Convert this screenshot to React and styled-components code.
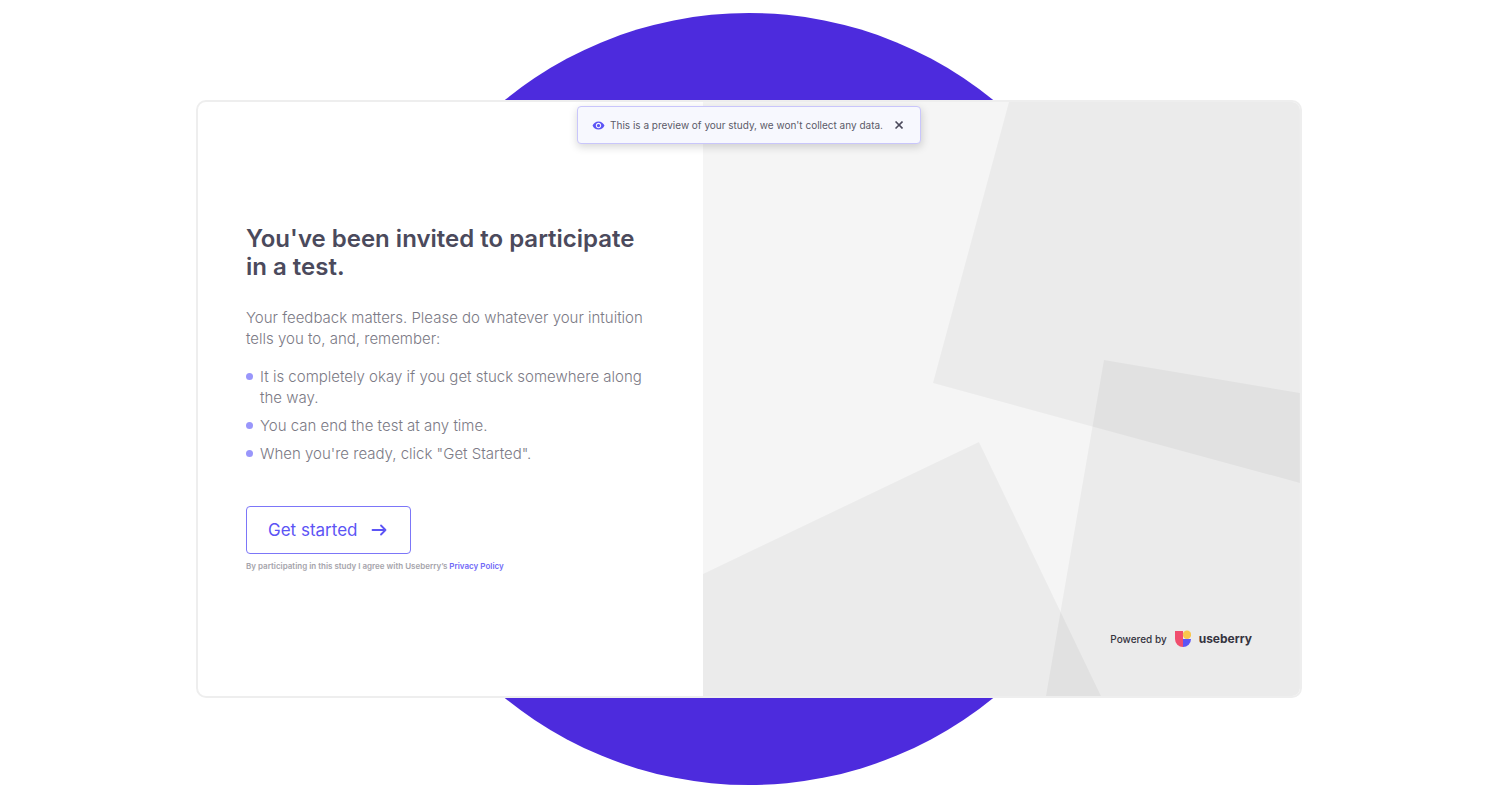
import React from 'react';
import styled, { createGlobalStyle } from 'styled-components';
import { MdVisibility } from 'react-icons/md';

const steps = [
    'It is completely okay if you get stuck somewhere along the way.',
    'You can end the test at any time.',
    'When you\'re ready, click "Get Started".',
];

const PreviewNotice = () => (
    <Notice role="status">
        <MdVisibility size={13} color="#5c54f5" aria-hidden="true" />
        <NoticeText>This is a preview of your study, we won't collect any data.</NoticeText>
        <CloseButton type="button" aria-label="Close">
            <svg width="8" height="8" viewBox="0 0 8 8" fill="none" stroke="currentColor" strokeWidth="1.6">
                <path d="M0.5 0.5 7.5 7.5M7.5 0.5 0.5 7.5" />
            </svg>
        </CloseButton>
    </Notice>
);

const Artwork = () => (
    <Backdrop viewBox="0 0 597 594" preserveAspectRatio="xMidYMid slice" aria-hidden="true">
        <path d="M306 0 230 281 597 381V0Z" />
        <path d="M401 258 597 291V594H343Z" />
        <path d="M0 472 276 340 398 594H0Z" />
    </Backdrop>
);

const BerryLogo = () => (
    <svg width="16" height="17" viewBox="0 0 16 17" aria-hidden="true">
        <path d="M0 1H8V17A8 8 0 0 1 0 9Z" fill="#f04e6e" />
        <circle cx="12" cy="4.7" r="4.2" fill="#f9c64d" />
        <path d="M8 9H16A8 8 0 0 1 8 17Z" fill="#5c54f5" />
    </svg>
);

export default function App() {
    return (
        <Page>
            <GlobalStyle />
            <Disc />
            <Card>
                <Intro>
                    <Title>You've been invited to participate in a test.</Title>
                    <Lead>Your feedback matters. Please do whatever your intuition tells you to, and, remember:</Lead>
                    <Steps>
                        {steps.map((step) => (
                            <Step key={step}>{step}</Step>
                        ))}
                    </Steps>
                    <StartButton type="button">
                        Get started
                        <svg width="16" height="12" viewBox="0 0 16 12" fill="none" stroke="currentColor" strokeWidth="1.8" strokeLinejoin="round" strokeLinecap="round" aria-hidden="true">
                            <path d="M1.5 6H14.5M10 1.5 14.5 6 10 10.5" />
                        </svg>
                    </StartButton>
                    <Consent>
                        By participating in this study I agree with Useberry’s <PolicyLink href="#privacy">Privacy Policy</PolicyLink>
                    </Consent>
                </Intro>
                <Side>
                    <Artwork />
                    <PoweredBy>
                        Powered by
                        <BerryLogo />
                        <Brand>useberry</Brand>
                    </PoweredBy>
                </Side>
                <PreviewNotice />
            </Card>
        </Page>
    );
}

const GlobalStyle = createGlobalStyle`
    *, *::before, *::after {
        box-sizing: border-box;
    }
    body {
        margin: 0;
        background: #fff;
        font-family: Inter, "Liberation Sans", sans-serif;
    }
`;

/* The disc and the card share one grid cell, the card on top. */
const Page = styled.main`
    display: grid;
    grid-template: minmax(100vh, auto) / minmax(0, 1fr);
    align-items: center;
    overflow: hidden;
    > * {
        grid-area: 1 / 1;
    }
`;

const Disc = styled.div`
    justify-self: center;
    width: 772px;
    height: 772px;
    border-radius: 50%;
    background: #4d2bdd;
`;

const Card = styled.section`
    position: relative;
    display: grid;
    grid-template-columns: 11fr 13fr;
    min-height: calc(100vh - 200px);
    margin: 0 196px;
    border: 2px solid #eee;
    border-radius: 10px;
    background: #fff;
`;

const Intro = styled.div`
    display: flex;
    flex-direction: column;
    align-items: flex-start;
    justify-content: center;
    padding: 48px;
`;

const Title = styled.h1`
    margin: 0 0 26px;
    color: #4b4a5c;
    font-size: 24px;
    font-weight: 600;
    line-height: 28px;
`;

const Lead = styled.p`
    margin: 0 0 17px;
    color: #7b7a85;
    font-size: 15px;
    font-weight: 300;
    line-height: 21px;
`;

const Steps = styled.ul`
    display: grid;
    gap: 7px;
    margin: 0 0 42px;
    padding: 0;
    list-style: none;
    color: #7b7a85;
    font-size: 15px;
    font-weight: 300;
    line-height: 21px;
`;

const Step = styled.li`
    display: flex;
    gap: 7px;
    &::before {
        content: '';
        flex: none;
        width: 7px;
        height: 7px;
        margin-top: 7px;
        border-radius: 50%;
        background: #9996fb;
    }
`;

const StartButton = styled.button`
    display: flex;
    align-items: center;
    gap: 14px;
    height: 48px;
    padding: 0 23px 0 21px;
    border: 1px solid #7c76f8;
    border-radius: 4px;
    background: #fff;
    color: #5c54f5;
    font-family: inherit;
    font-size: 17px;
    cursor: pointer;
`;

const Consent = styled.p`
    margin: 6px 0 0;
    color: #a5a4ab;
    font-size: 8px;
    font-weight: 600;
    line-height: 13px;
`;

const PolicyLink = styled.a`
    color: #7069f7;
    text-decoration: none;
`;

const Side = styled.div`
    position: relative;
    display: flex;
    align-items: flex-end;
    justify-content: flex-end;
    padding: 49px 48px;
    border-radius: 0 8px 8px 0;
    background: #f5f5f5;
    overflow: hidden;
`;

const Backdrop = styled.svg`
    position: absolute;
    inset: 0;
    width: 100%;
    height: 100%;
    fill: #000;
    fill-opacity: 0.04;
`;

const PoweredBy = styled.div`
    position: relative;
    display: flex;
    align-items: center;
    gap: 8px;
    color: #35343f;
    font-size: 10px;
    font-weight: 500;
`;

const Brand = styled.span`
    font-size: 12px;
    font-weight: 700;
`;

const Notice = styled.div`
    position: absolute;
    top: 4px;
    left: 50%;
    transform: translateX(-50%);
    display: flex;
    align-items: center;
    height: 38px;
    padding: 0 17px 0 14px;
    border: 1px solid #c9c6fb;
    border-radius: 4px;
    background: #f7f8fe;
    box-shadow: 0 3px 8px rgba(0, 0, 0, 0.16);
    white-space: nowrap;
`;

const NoticeText = styled.span`
    margin: 0 12px 0 5px;
    color: #5b5a68;
    font-size: 10px;
`;

const CloseButton = styled.button`
    display: flex;
    padding: 0;
    border: 0;
    background: none;
    color: #4b4a5c;
    cursor: pointer;
`;
